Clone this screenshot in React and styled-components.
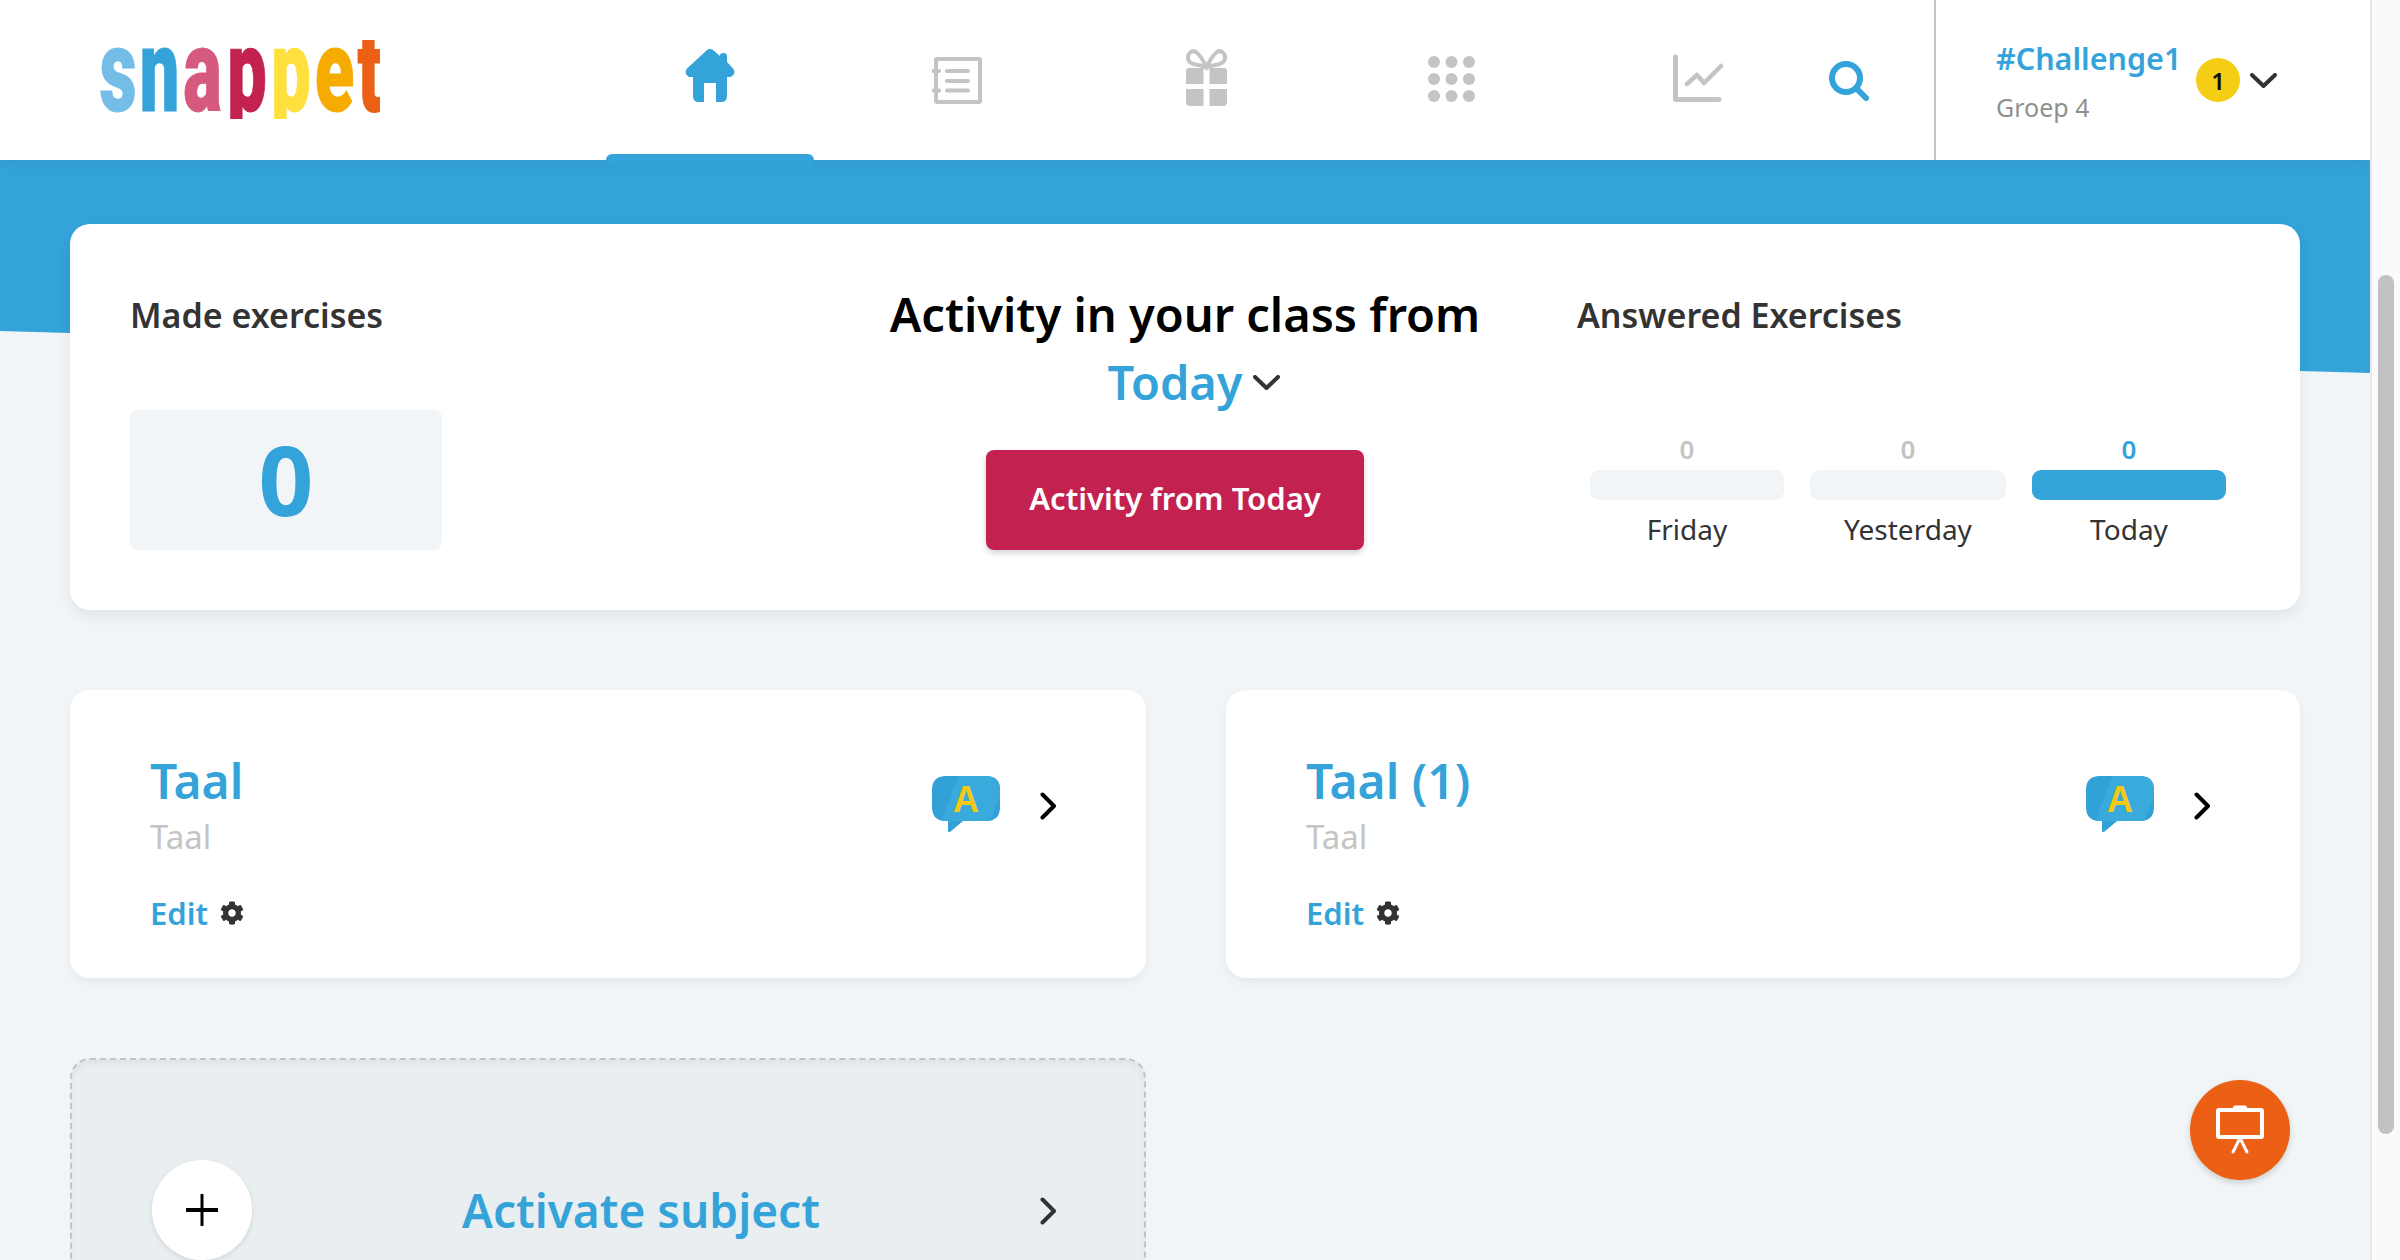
import styled, { createGlobalStyle } from "styled-components";
import { FaCog } from "react-icons/fa";

const BLUE = "#34a3d9";
const GREY = "#c4c4c4";
const PALE = "#f1f5f8";

const GlobalStyle = createGlobalStyle`
  html, body {
    margin: 0;
    padding: 0;
    height: 1260px;
    overflow: hidden;
    background: ${PALE};
    font-family: "Noto Sans", "Open Sans", sans-serif;
  }
  * { box-sizing: border-box; }
`;

const Page = styled.div`
  position: relative;
  display: flex;
  width: 2400px;
  height: 1260px;
  overflow: hidden;
`;

const Main = styled.div`
  position: relative;
  width: 2370px;
  height: 1260px;
  overflow: hidden;
`;

const Band = styled.div`
  position: absolute;
  inset: 160px 0 auto 0;
  height: 214px;
  background: ${BLUE};
  clip-path: polygon(0 0, 100% 0, 100% 213px, 2300px 211px, 70px 173px, 0 171px);
`;

const Header = styled.header`
  position: relative;
  z-index: 2;
  display: flex;
  align-items: stretch;
  height: 160px;
  padding-left: 100px;
  background: #fff;
  box-shadow: 0 2px 14px rgba(0, 0, 0, 0.06);
`;

const LogoWrap = styled.div`
  display: flex;
  align-items: flex-start;
  width: 280px;
  margin-right: 206px;
  padding-top: 40px;
`;

const Nav = styled.nav`
  display: grid;
  grid-template-columns: repeat(5, 247px);
`;

const NavItem = styled.div`
  position: relative;
  display: flex;
  align-items: flex-start;
  justify-content: center;
  padding-top: ${(p) => p.$top}px;
  padding-left: ${(p) => p.$nudge || 0}px;
`;

const ActiveBar = styled.span`
  position: absolute;
  left: 20px;
  bottom: -6px;
  width: 208px;
  height: 12px;
  border-radius: 6px;
  background: ${BLUE};
`;

const SearchSlot = styled.div`
  width: 113px;
  padding: 61px 0 0 8px;
`;

const UserBlock = styled.div`
  display: flex;
  align-items: center;
  flex: 1;
  padding-left: 60px;
  border-left: 2px solid ${GREY};
`;

const UserText = styled.div`
  width: 200px;
  display: flex;
  flex-direction: column;
`;

const ChallengeName = styled.div`
  font-size: 30.5px;
  line-height: 44px;
  font-weight: 600;
  color: ${BLUE};
  white-space: nowrap;
`;

const GroupName = styled.div`
  margin-top: 10px;
  font-size: 25px;
  line-height: 34px;
  color: #8f8f8f;
`;

const Badge = styled.div`
  display: flex;
  align-items: center;
  justify-content: center;
  width: 44px;
  height: 44px;
  margin-right: 10px;
  border-radius: 50%;
  background: #f6cd15;
  color: #111;
  font-size: 24px;
  font-weight: 600;
`;

const Content = styled.div`
  position: relative;
  z-index: 1;
  padding: 64px 70px 0;
`;

const ActivityCard = styled.section`
  display: grid;
  grid-template-columns: 755px 600px 1fr;
  height: 386px;
  padding: 56px 0 0 60px;
  background: #fff;
  border-radius: 20px;
  box-shadow: 0 6px 14px rgba(0, 0, 0, 0.07);
`;

const Column = styled.div`
  padding-top: 10px;
  padding-left: ${(p) => p.$indent || 0}px;
`;

const CardTitle = styled.h2`
  margin: 0;
  font-size: 34px;
  line-height: 50px;
  font-weight: 600;
  color: #333;
  white-space: nowrap;
`;

const CountBox = styled.div`
  display: flex;
  align-items: center;
  justify-content: center;
  width: 312px;
  height: 140px;
  margin-top: 70px;
  padding-bottom: 3px;
  background: ${PALE};
  border-radius: 8px;
  color: ${BLUE};
  font-size: 96px;
  font-weight: 700;
`;

const CenterColumn = styled.div`
  display: flex;
  flex-direction: column;
  align-items: center;
`;

const Headline = styled.h1`
  margin: 0;
  font-size: 47px;
  line-height: 68px;
  font-weight: 600;
  color: #000;
  white-space: nowrap;
`;

const PeriodPicker = styled.div`
  display: flex;
  align-items: center;
  gap: 10px;
  margin-left: 17px;
  font-size: 47px;
  line-height: 68px;
  font-weight: 600;
  color: ${BLUE};
`;

const ActivityButton = styled.button`
  width: 378px;
  height: 100px;
  margin: 34px 20px 0 0;
  padding: 0 0 4px;
  border: 0;
  border-radius: 8px;
  background: #c32250;
  color: #fff;
  font-family: inherit;
  font-size: 31px;
  font-weight: 600;
  box-shadow: 0 3px 6px rgba(0, 0, 0, 0.18);
`;

const Bars = styled.div`
  display: grid;
  grid-template-columns: 194px 196px 194px;
  column-gap: 26px;
  margin: 96px 0 0 13px;
`;

const BarColumn = styled.div`
  display: flex;
  flex-direction: column;
  align-items: stretch;
  text-align: center;
`;

const BarValue = styled.div`
  height: 30px;
  margin-top: -2px;
  margin-bottom: 2px;
  font-size: 26px;
  line-height: 30px;
  font-weight: 600;
  color: ${(p) => (p.$active ? BLUE : GREY)};
`;

const Bar = styled.div`
  height: 30px;
  margin-top: 4px;
  border-radius: 9px;
  background: ${(p) => (p.$active ? BLUE : PALE)};
`;

const BarLabel = styled.div`
  margin-top: 9px;
  font-size: 28px;
  line-height: 40px;
  color: #333;
`;

const SubjectGrid = styled.div`
  display: grid;
  grid-template-columns: 1076px 1fr;
  gap: 80px;
  margin-top: 80px;
`;

const SubjectCard = styled.article`
  display: flex;
  justify-content: space-between;
  height: 288px;
  padding: 61px 90px 0 80px;
  background: #fff;
  border-radius: 20px;
  box-shadow: 0 4px 10px rgba(0, 0, 0, 0.05);
`;

const SubjectTitle = styled.div`
  font-size: 48px;
  line-height: 60px;
  font-weight: 600;
  color: ${BLUE};
`;

const SubjectSub = styled.div`
  margin-top: 4px;
  font-size: 33px;
  line-height: 44px;
  color: ${GREY};
`;

const EditRow = styled.div`
  display: flex;
  align-items: center;
  gap: 12px;
  margin-top: 34px;
  font-size: 31px;
  line-height: 40px;
  font-weight: 600;
  color: ${BLUE};

  svg {
    color: #333;
    font-size: 24px;
  }
`;

const SubjectSide = styled.div`
  display: flex;
  align-items: flex-start;
  gap: 40px;
  padding-top: 25px;
`;

const ChevronRightWrap = styled.div`
  padding-top: ${(p) => p.$top || 16}px;
  color: ${(p) => p.$color || "#000"};
  line-height: 0;
`;

const ActivateCard = styled.article`
  display: flex;
  align-items: center;
  height: 304px;
  padding: 0 88px 0 80px;
  background: #e9eef1;
  border: 2px dashed ${GREY};
  border-radius: 20px;
  box-shadow: inset 0 3px 6px rgba(0, 0, 0, 0.05);
`;

const PlusCircle = styled.div`
  display: flex;
  align-items: center;
  justify-content: center;
  width: 100px;
  height: 100px;
  border-radius: 50%;
  background: #fff;
  box-shadow: 0 2px 5px rgba(0, 0, 0, 0.1);
`;

const ActivateLabel = styled.div`
  margin-left: 210px;
  font-size: 46px;
  font-weight: 600;
  color: ${BLUE};
  white-space: nowrap;
`;

const Spacer = styled.div`
  flex: 1;
`;

const PresentButton = styled.div`
  position: absolute;
  z-index: 3;
  left: 2190px;
  top: 1080px;
  display: flex;
  align-items: center;
  justify-content: center;
  width: 100px;
  height: 100px;
  border-radius: 50%;
  background: #eb6014;
  box-shadow: 0 3px 6px rgba(0, 0, 0, 0.16);
`;

const ScrollTrack = styled.div`
  width: 30px;
  height: 1260px;
  padding: 275px 0 0 6px;
  background: #fafafa;
  border-left: 2px solid #e8e8e8;
`;

const ScrollThumb = styled.div`
  width: 16px;
  height: 859px;
  border-radius: 8px;
  background: #c1c1c1;
`;

const LOGO_LETTERS = [
  { ch: "s", cx: 18, sx: 0.62, color: "#74bde6" },
  { ch: "n", cx: 59.5, sx: 0.6, color: BLUE },
  { ch: "a", cx: 102.5, sx: 0.62, color: "#d65a7f" },
  { ch: "p", cx: 147, sx: 0.6, color: "#c32250" },
  { ch: "p", cx: 191, sx: 0.6, color: "#ffe03c" },
  { ch: "e", cx: 234.5, sx: 0.62, color: "#f5ab00" },
  { ch: "t", cx: 269.5, sx: 0.6, color: "#eb6014" },
];

function Logo() {
  return (
    <svg width="280" height="79" viewBox="0 0 280 79">
      {LOGO_LETTERS.map((l, i) => (
        <text
          key={i}
          transform={`translate(${l.cx} 70.5) scale(${l.sx} 1)`}
          textAnchor="middle"
          fontFamily="Roboto"
          fontWeight="900"
          fontSize="117"
          fill={l.color}
          stroke={l.color}
          strokeWidth="1"
        >
          {l.ch}
        </text>
      ))}
    </svg>
  );
}

function HomeIcon() {
  return (
    <svg width="50" height="53" viewBox="0 0 50 53" fill={BLUE}>
      <path d="M22 1 Q25 -1 28 1 L35 7 V6 Q35 4 38.5 4 Q42 4 42 7 V13 L48.5 20 Q51 25 46 28 H42 V47 Q42 53 36 53 H31 V34 H19 V53 H14 Q8 53 8 47 V28 H4 Q-1 25 1.5 20 Z" />
    </svg>
  );
}

function NotebookIcon() {
  return (
    <svg width="50" height="47" viewBox="0 0 50 47" fill="none" stroke={GREY} strokeWidth="4" strokeLinecap="round" strokeLinejoin="round">
      <rect x="4" y="2" width="44" height="43" rx="1" />
      <path d="M15 14 H36 M15 24 H36 M15 33.5 H36" />
      <path d="M1.5 14 H7 M1.5 33.5 H7" />
    </svg>
  );
}

function GiftIcon() {
  return (
    <svg width="41" height="57" viewBox="0 0 41 57">
      <path d="M19 18 C14 15 6 17 3 12 C0 6 5 0 10 3 C14 6 18 13 20.5 18 C23 13 27 6 31 3 C36 0 41 6 38 12 C35 17 27 15 22 18" fill="none" stroke={GREY} strokeWidth="4" strokeLinecap="round" />
      <path d="M0 22 Q0 19 3 19 H17.5 V35 H0 Z M23.5 19 H38 Q41 19 41 22 V35 H23.5 Z M0 40 H17.5 V57 H4 Q0 57 0 53 Z M23.5 40 H41 V53 Q41 57 37 57 H23.5 Z" fill={GREY} />
    </svg>
  );
}

function DotsIcon() {
  const cells = [6, 23.5, 41];
  return (
    <svg width="47" height="46" viewBox="0 0 47 46" fill={GREY}>
      {[6, 23, 40].map((cy) =>
        cells.map((cx) => <circle key={`${cx}-${cy}`} cx={cx} cy={cy} r="6" />)
      )}
    </svg>
  );
}

function ChartIcon() {
  return (
    <svg width="52" height="49" viewBox="0 0 52 49" fill="none" stroke={GREY} strokeWidth="5" strokeLinecap="round" strokeLinejoin="round">
      <path d="M3.5 3 V45.5 H47" />
      <path d="M15 30 L25 21 L32 29 L49 12" strokeWidth="4.5" />
    </svg>
  );
}

function SearchIcon() {
  return (
    <svg width="40" height="40" viewBox="0 0 40 40" fill="none" stroke={BLUE} strokeLinecap="round">
      <circle cx="17" cy="17" r="14" strokeWidth="6" />
      <path d="M28 28 L37 37" strokeWidth="6" />
    </svg>
  );
}

function ChevronDown({ color = "#333" }) {
  return (
    <svg width="27" height="15" viewBox="0 0 27 15" fill="none" stroke={color} strokeWidth="4" strokeLinecap="round" strokeLinejoin="round">
      <path d="M2 2 L13.5 13 L25 2" />
    </svg>
  );
}

function ChevronRight() {
  return (
    <svg width="16" height="28" viewBox="0 0 16 28" fill="none" stroke="currentColor" strokeWidth="4" strokeLinecap="round" strokeLinejoin="round">
      <path d="M2.5 2.5 L14 14 L2.5 25.5" />
    </svg>
  );
}

function BubbleIcon() {
  return (
    <svg width="68" height="57" viewBox="0 0 68 57">
      <path d="M14 0 H54 Q68 0 68 14 V31 Q68 45 54 45 H31 L18 56 Q16 57 16 54 V45 H14 Q0 45 0 31 V14 Q0 0 14 0 Z" fill="#31a1d7" />
      <path d="M26 0 H54 Q68 0 68 14 V20 L58 45 H10 Z" fill="#3aaadc" />
      <text x="34" y="36" textAnchor="middle" fontFamily="Liberation Sans" fontWeight="700" fontSize="36" fill="#f6c915">A</text>
    </svg>
  );
}

function EaselIcon() {
  return (
    <svg width="50" height="50" viewBox="0 0 50 50" fill="none" stroke="#fff" strokeLinecap="round" strokeLinejoin="round">
      <rect x="3" y="5" width="44" height="27" rx="1" strokeWidth="4" />
      <path d="M20 2.5 H30" strokeWidth="4" />
      <path d="M25 33 L18 47 M25 33 L32 47" strokeWidth="3" />
    </svg>
  );
}

function PlusIcon() {
  return (
    <svg width="32" height="32" viewBox="0 0 32 32" fill="none" stroke="#000" strokeLinecap="round">
      <path d="M16 1 V31" strokeWidth="3" />
      <path d="M1 16 H31" strokeWidth="4" />
    </svg>
  );
}

const navItems = [
  { icon: <HomeIcon />, top: 49, active: true },
  { icon: <NotebookIcon />, top: 57 },
  { icon: <GiftIcon />, top: 49, nudge: 6 },
  { icon: <DotsIcon />, top: 56, nudge: 2 },
  { icon: <ChartIcon />, top: 54 },
];

const days = [
  { label: "Friday", value: 0 },
  { label: "Yesterday", value: 0 },
  { label: "Today", value: 0, active: true },
];

const subjects = ["Taal", "Taal (1)"];

export default function App() {
  return (
    <Page>
      <GlobalStyle />
      <Main>
        <Band />
        <Header>
          <LogoWrap>
            <Logo />
          </LogoWrap>
          <Nav>
            {navItems.map((item, i) => (
              <NavItem key={i} $top={item.top} $nudge={item.nudge}>
                {item.icon}
                {item.active && <ActiveBar />}
              </NavItem>
            ))}
          </Nav>
          <SearchSlot>
            <SearchIcon />
          </SearchSlot>
          <UserBlock>
            <UserText>
              <ChallengeName>#Challenge1</ChallengeName>
              <GroupName>Groep 4</GroupName>
            </UserText>
            <Badge>1</Badge>
            <ChevronDown />
          </UserBlock>
        </Header>

        <Content>
          <ActivityCard>
            <Column>
              <CardTitle>Made exercises</CardTitle>
              <CountBox>0</CountBox>
            </Column>
            <CenterColumn>
              <Headline>Activity in your class from</Headline>
              <PeriodPicker>
                Today
                <ChevronDown />
              </PeriodPicker>
              <ActivityButton>Activity from Today</ActivityButton>
            </CenterColumn>
            <Column $indent={92}>
              <CardTitle>Answered Exercises</CardTitle>
              <Bars>
                {days.map((d) => (
                  <BarColumn key={d.label}>
                    <BarValue $active={d.active}>{d.value}</BarValue>
                    <Bar $active={d.active} />
                    <BarLabel>{d.label}</BarLabel>
                  </BarColumn>
                ))}
              </Bars>
            </Column>
          </ActivityCard>

          <SubjectGrid>
            {subjects.map((name) => (
              <SubjectCard key={name}>
                <div>
                  <SubjectTitle>{name}</SubjectTitle>
                  <SubjectSub>Taal</SubjectSub>
                  <EditRow>
                    Edit
                    <FaCog />
                  </EditRow>
                </div>
                <SubjectSide>
                  <BubbleIcon />
                  <ChevronRightWrap>
                    <ChevronRight />
                  </ChevronRightWrap>
                </SubjectSide>
              </SubjectCard>
            ))}
            <ActivateCard>
              <PlusCircle>
                <PlusIcon />
              </PlusCircle>
              <ActivateLabel>Activate subject</ActivateLabel>
              <Spacer />
              <ChevronRightWrap $top={1} $color="#333">
                <ChevronRight />
              </ChevronRightWrap>
            </ActivateCard>
          </SubjectGrid>
        </Content>

        <PresentButton>
          <EaselIcon />
        </PresentButton>
      </Main>
      <ScrollTrack>
        <ScrollThumb />
      </ScrollTrack>
    </Page>
  );
}
